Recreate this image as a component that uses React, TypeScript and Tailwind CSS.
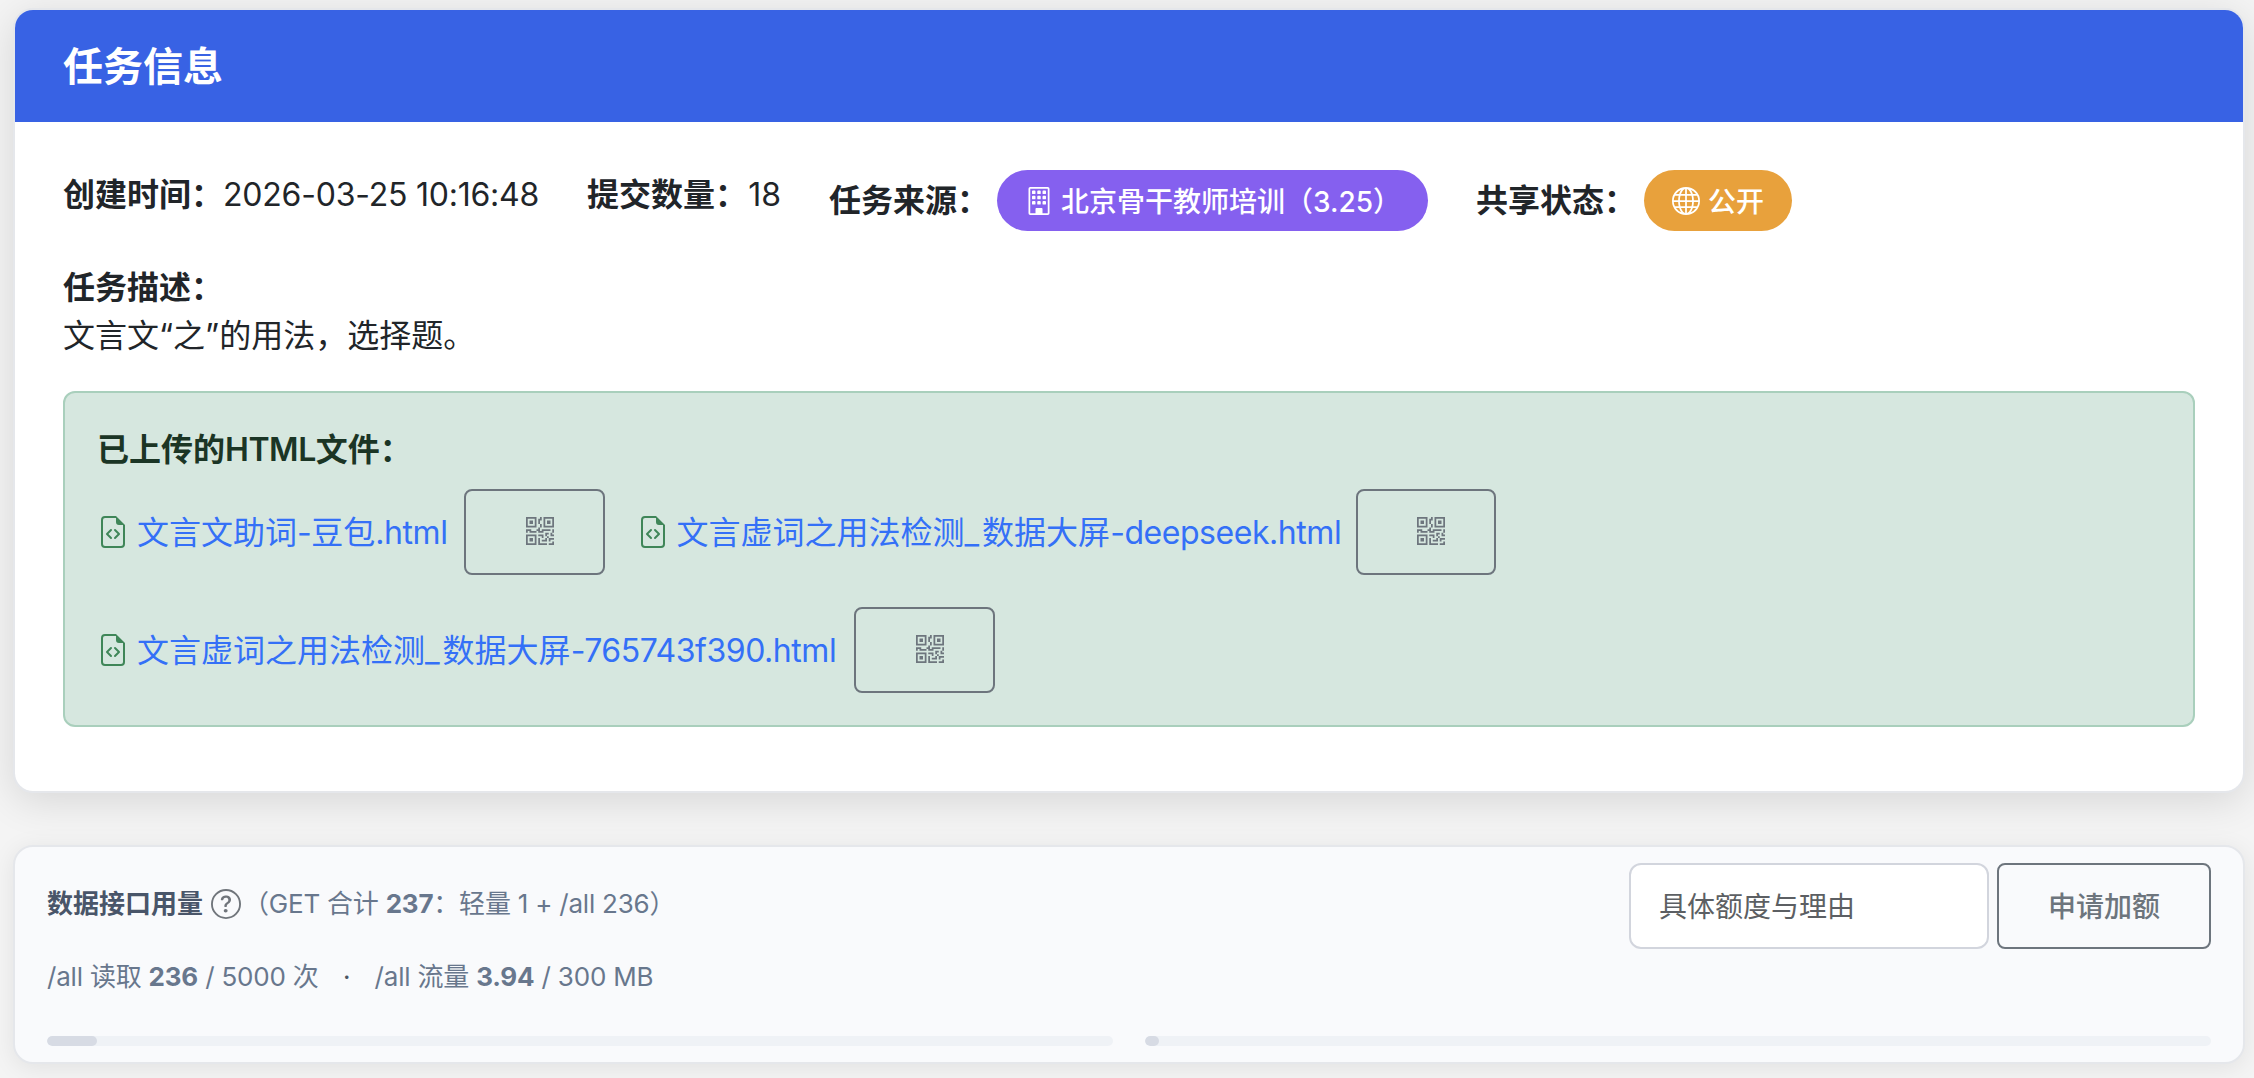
import type { ReactNode } from "react";
import { BsBuilding, BsFileEarmarkCode, BsGlobe, BsQrCode, BsQuestionCircle } from "react-icons/bs";

const files = [
  { name: "文言文助词-豆包.html", width: "w-[311px]" },
  { name: "文言虚词之用法检测_数据大屏-deepseek.html", width: "w-[663px]" },
  { name: "文言虚词之用法检测_数据大屏-765743f390.html", width: "w-[701px]" },
];

const usage = [
  { id: "reads", used: 236, limit: 5000 },
  { id: "traffic", used: 3.94, limit: 300 },
];

/* Latin runs are set a little tighter than the Chinese around them */
function MixedText({ text }: { text: string }) {
  return text.split(/([\x21-\x7e]+)/).map((part, i) => {
    if (part === "_") return <span key={i} className="tracking-[3px]">_</span>;
    if (i % 2 === 1) return <span key={i} className="tracking-[-0.45px]">{part}</span>;
    return part;
  });
}

function InfoItem({ label, children }: { label: string; children: ReactNode }) {
  return (
    <div className="flex items-center whitespace-nowrap">
      <strong className="font-semibold">{label}</strong>
      {children}
    </div>
  );
}

function FileLink({ name, width }: { name: string; width: string }) {
  return (
    <div className="flex items-center">
      <BsFileEarmarkCode className="mr-2 size-8 shrink-0 text-[#3f8658]" />
      <a href="#" className={`${width} mr-4 translate-y-px whitespace-nowrap text-[#3470f7]`}>
        <MixedText text={name} />
      </a>
      <button
        type="button"
        aria-label="二维码"
        className="flex h-[86px] w-[140.5px] items-center justify-center rounded-lg border-2 border-[#6d757d] pb-0.5 pl-[11px] text-[#6d757d]"
      >
        <BsQrCode className="size-7" />
      </button>
    </div>
  );
}

function TaskCard() {
  return (
    <section className="overflow-hidden rounded-[20px] border-2 border-[#e5e7eb] bg-white bg-clip-padding shadow-[0_8px_40px_rgba(0,0,0,0.12)]">
      <header className="flex h-28 items-center bg-[#3862e4] px-12">
        <h5 className="translate-y-px text-[40px] leading-[48px] font-semibold text-white">任务信息</h5>
      </header>

      <div className="px-12 pt-12 pb-16">
        <div className="flex items-start gap-12">
          <div className="flex translate-y-px gap-12">
            <InfoItem label="创建时间：">
              <span className="w-[316px] tracking-[-0.22px]">2026-03-25 10:16:48</span>
            </InfoItem>
            <InfoItem label="提交数量：">
              <span className="w-[34px] text-right">18</span>
            </InfoItem>
          </div>
          <InfoItem label="任务来源：">
            <span className="ml-2 flex h-[61px] w-[431px] items-center gap-2 rounded-full bg-[#8560ef] px-7 text-[28px] font-medium text-white">
              <BsBuilding className="size-7 shrink-0" />
              <span className="translate-y-px">北京骨干教师培训（3.25）</span>
            </span>
          </InfoItem>
          <InfoItem label="共享状态：">
            <span className="ml-2 flex h-[61px] items-center gap-2 rounded-full bg-[#e8a13c] px-7 text-[28px] font-medium text-white">
              <BsGlobe className="size-7" />
              <span className="translate-y-px">公开</span>
            </span>
          </InfoItem>
        </div>

        <div className="mt-8">
          <strong className="block translate-y-px font-semibold">任务描述：</strong>
          <p className="translate-y-px">文言文“之”的用法，选择题。</p>
        </div>

        <div className="mt-8 rounded-xl border-2 border-[#a9cfbc] bg-[#d6e7df] p-8">
          <strong className="block translate-y-px font-semibold text-[#1b3525]">
            <MixedText text="已上传的HTML文件：" />
          </strong>
          <div className="mt-4 flex max-w-[1500px] flex-wrap gap-8">
            {files.map((f) => (
              <FileLink key={f.name} {...f} />
            ))}
          </div>
        </div>
      </div>
    </section>
  );
}

function UsageCard() {
  return (
    <section className="rounded-[20px] border-2 border-[#e5e7eb] bg-[#f9fafc] px-8 py-4 text-[26px] text-[#68778d] shadow-[0_4px_24px_rgba(0,0,0,0.08)]">
      <div className="flex items-start justify-between">
        <div className="whitespace-nowrap">
          <div className="flex h-[82px] items-center">
            <span className="font-semibold text-[#495569]">数据接口用量</span>
            <BsQuestionCircle className="mr-0.5 ml-2 size-[30px] text-[#70757b]" />
            <span className="tracking-[-0.22px]">
              （GET 合计 <b>237</b>：轻量 1 + /all 236）
            </span>
          </div>
          <div className="flex h-16 items-center tracking-[-0.2px]">
            <span>
              /all 读取 <b>236</b> / 5000 次
            </span>
            <span className="w-[56px] text-center text-[#4b5563]">·</span>
            <span>
              /all 流量 <b>3.94</b> / 300 MB
            </span>
          </div>
        </div>

        <form className="flex gap-2 text-[28px]">
          <input
            placeholder="具体额度与理由"
            className="h-[86px] w-[360px] rounded-xl border-2 border-[#d2d5dd] bg-white px-7 pt-0.5 placeholder:text-[#5c5f63]"
          />
          <button
            type="button"
            className="h-[86px] w-[214px] rounded-lg border-2 border-[#6d757d] pt-0.5 font-medium text-[#6d757d]"
          >
            申请加额
          </button>
        </form>
      </div>

      <div className="mt-[27px] grid grid-cols-2 gap-8">
        {usage.map((u) => (
          <div key={u.id} className="h-2.5 overflow-hidden rounded-full bg-[#eff2f6]">
            <div
              className="h-full rounded-full bg-[#d7dbe4]"
              style={{ width: `${(u.used / u.limit) * 100}%` }}
            />
          </div>
        ))}
      </div>
    </section>
  );
}

export default function App() {
  return (
    <div className="flex h-[1078px] flex-col gap-[52px] overflow-hidden bg-[#f4f4f4] pt-2 pr-[9px] pl-[13px] font-['Inter','Noto_Sans_CJK_SC',sans-serif] text-[32px] leading-[48px] text-[#212529]">
      <TaskCard />
      <UsageCard />
    </div>
  );
}
